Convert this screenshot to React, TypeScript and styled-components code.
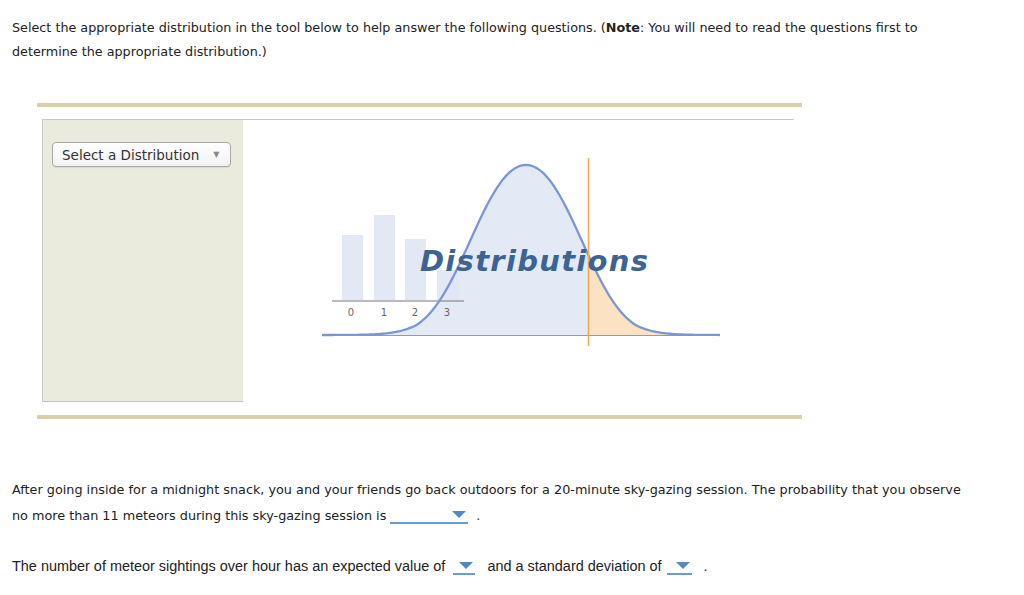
import React from "react";
import styled, { createGlobalStyle } from "styled-components";

const Global = createGlobalStyle`
  html, body { margin: 0; padding: 0; background: #fff; }
  body { font-family: "DejaVu Sans", Verdana, sans-serif; color: #222; }
`;

const Page = styled.div`
  padding: 16px 0 0 12px;
  width: 977px;
  box-sizing: border-box;
`;

const Para = styled.p`
  margin: 0;
  font-size: 12.75px;
  line-height: 24px;
  color: #222;
  max-width: 940px;
`;

const Strong = styled.b`
  font-weight: bold;
`;

const Tool = styled.div`
  margin: 39px 0 0 25px;
  width: 765px;
`;

const TanBar = styled.div`
  height: 4px;
  background: #d9cfa8;
`;

const Frame = styled.div`
  margin: 12px 8px 13px 5px;
  display: flex;
  height: 283px;
  border-top: 1px solid #c8c8c8;
  box-sizing: border-box;
`;

const Side = styled.div`
  width: 201px;
  background: #ebebdd;
  border-left: 1px solid #c8c8c8;
  border-bottom: 1px solid #c0c0c0;
  box-sizing: border-box;
  padding: 22px 0 0 9px;
`;

const SelectBtn = styled.div`
  width: 179px;
  height: 25px;
  box-sizing: border-box;
  border: 1px solid #a9a9a9;
  border-radius: 4px;
  background: linear-gradient(#ffffff, #f1f1f1);
  box-shadow: 0 1px 1px rgba(0,0,0,0.08);
  display: flex;
  align-items: center;
  padding: 0 0 0 9px;
  font-size: 13.5px;
  color: #333;
  gap: 14px;
`;

const Caret = styled.span`
  font-size: 8px;
  color: #888;
`;

const Stage = styled.div`
  flex: 1;
`;

const ChartSvg = styled.svg`
  display: block;
`;

const Gap = styled.div`
  height: 58px;
`;

const Line = styled.div<{ $sans?: boolean }>`
  font-size: ${(p) => (p.$sans ? "14.45px" : "12.8px")};
  line-height: 26px;
  font-family: ${(p) => (p.$sans ? '"Liberation Sans", Arial, sans-serif' : '"DejaVu Sans", Verdana, sans-serif')};
  white-space: nowrap;
`;

const Drop = styled.span<{ $w: number; $ml: number; $mr: number }>`
  display: inline-block;
  position: relative;
  width: ${(p) => p.$w}px;
  height: 15px;
  vertical-align: -4px;
  border-bottom: 2px solid #6b9bd1;
  margin: 0 ${(p) => p.$mr}px 0 ${(p) => p.$ml}px;
`;

const DropArrow = styled.span`
  position: absolute;
  right: 2px;
  top: 4px;
  width: 0;
  height: 0;
  border-left: 7px solid transparent;
  border-right: 7px solid transparent;
  border-top: 7px solid #4f88c6;
`;

const Spacer = styled.div<{ $h: number }>`
  height: ${(p) => p.$h}px;
`;

function bell(x: number) {
  const mu = 526;
  const d = Math.abs(x - mu);
  const s = 57 - 11 * Math.min(1, d / 110);
  return 335 - 170 * Math.exp(-(d * d) / (2 * s * s));
}

function Chart() {
  // svg origin at page x=243, y=120
  const ox = 243;
  const oy = 120;
  const pts: string[] = [];
  for (let x = 322; x <= 720; x += 2) pts.push(`${x - ox},${(bell(x) - oy).toFixed(2)}`);
  const curve = "M" + pts.join(" L");
  const fillAll = curve + ` L${720 - ox},${335 - oy} L${322 - ox},${335 - oy} Z`;
  const rpts: string[] = [];
  for (let x = 588; x <= 720; x += 2) rpts.push(`${x - ox},${(bell(x) - oy).toFixed(2)}`);
  const fillRight = "M" + rpts.join(" L") + ` L${720 - ox},${335 - oy} L${588 - ox},${335 - oy} Z`;
  const bars = [
    { x: 342, y: 235 },
    { x: 374, y: 215 },
    { x: 405, y: 239 },
    { x: 437, y: 270 },
  ];
  const labels = [
    { x: 351, t: "0" },
    { x: 384, t: "1" },
    { x: 415, t: "2" },
    { x: 447, t: "3" },
  ];
  return (
    <ChartSvg width={551} height={282} viewBox="0 0 551 282">
      {bars.map((b, i) => (
        <rect key={i} x={b.x - ox} y={b.y - oy} width={21} height={300 - b.y} fill="#e3e8f5" />
      ))}
      <path d={fillAll} fill="#dfe5f5" fillOpacity={0.85} />
      <path d={fillRight} fill="#fbe2c2" />
      <line x1={332 - ox} y1={301 - oy} x2={464 - ox} y2={301 - oy} stroke="#777" strokeWidth={1} />
      {labels.map((l) => (
        <text key={l.t} x={l.x - ox} y={316 - oy} fontSize={10} fill="#666" textAnchor="middle" fontFamily='"DejaVu Sans", sans-serif'>
          {l.t}
        </text>
      ))}
      <line x1={340 - ox} y1={335.5 - oy} x2={700 - ox} y2={335.5 - oy} stroke="#999" strokeWidth={1.2} />
      <path d={curve} fill="none" stroke="#7b96d6" strokeWidth={2.3} />
      <line x1={588.5 - ox} y1={158 - oy} x2={588.5 - ox} y2={346 - oy} stroke="#f5a956" strokeWidth={1.6} />
      <text
        x={420 - ox}
        y={271 - oy}
        fontSize={29}
        fontWeight="bold"
        fontStyle="italic"
        fill="#3b6394"
        fontFamily='"DejaVu Sans", Verdana, sans-serif'
        letterSpacing={1.3}
      >
        Distributions
      </text>
    </ChartSvg>
  );
}

export default function App() {
  return (
    <>
      <Global />
      <Page>
        <Para>
          Select the appropriate distribution in the tool below to help answer the following questions. (<Strong>Note</Strong>: You will need to read the questions first to determine the appropriate distribution.)
        </Para>
        <Tool>
          <TanBar />
          <Frame>
            <Side>
              <SelectBtn>
                Select a Distribution <Caret>▼</Caret>
              </SelectBtn>
            </Side>
            <Stage>
              <Chart />
            </Stage>
          </Frame>
          <TanBar />
        </Tool>
        <Gap />
        <Line>
          After going inside for a midnight snack, you and your friends go back outdoors for a 20-minute sky-gazing session. The probability that you observe
        </Line>
        <Line>
          no more than 11 meteors during this sky-gazing session is
          <Drop $w={78} $ml={4} $mr={8}>
            <DropArrow />
          </Drop>
          .
        </Line>
        <Spacer $h={24} />
        <Line $sans>
          The number of meteor sightings over hour has an expected value of
          <Drop $w={22} $ml={8} $mr={12}>
            <DropArrow />
          </Drop>
          and a standard deviation of
          <Drop $w={25} $ml={5} $mr={12}>
            <DropArrow />
          </Drop>
          .
        </Line>
      </Page>
    </>
  );
}
